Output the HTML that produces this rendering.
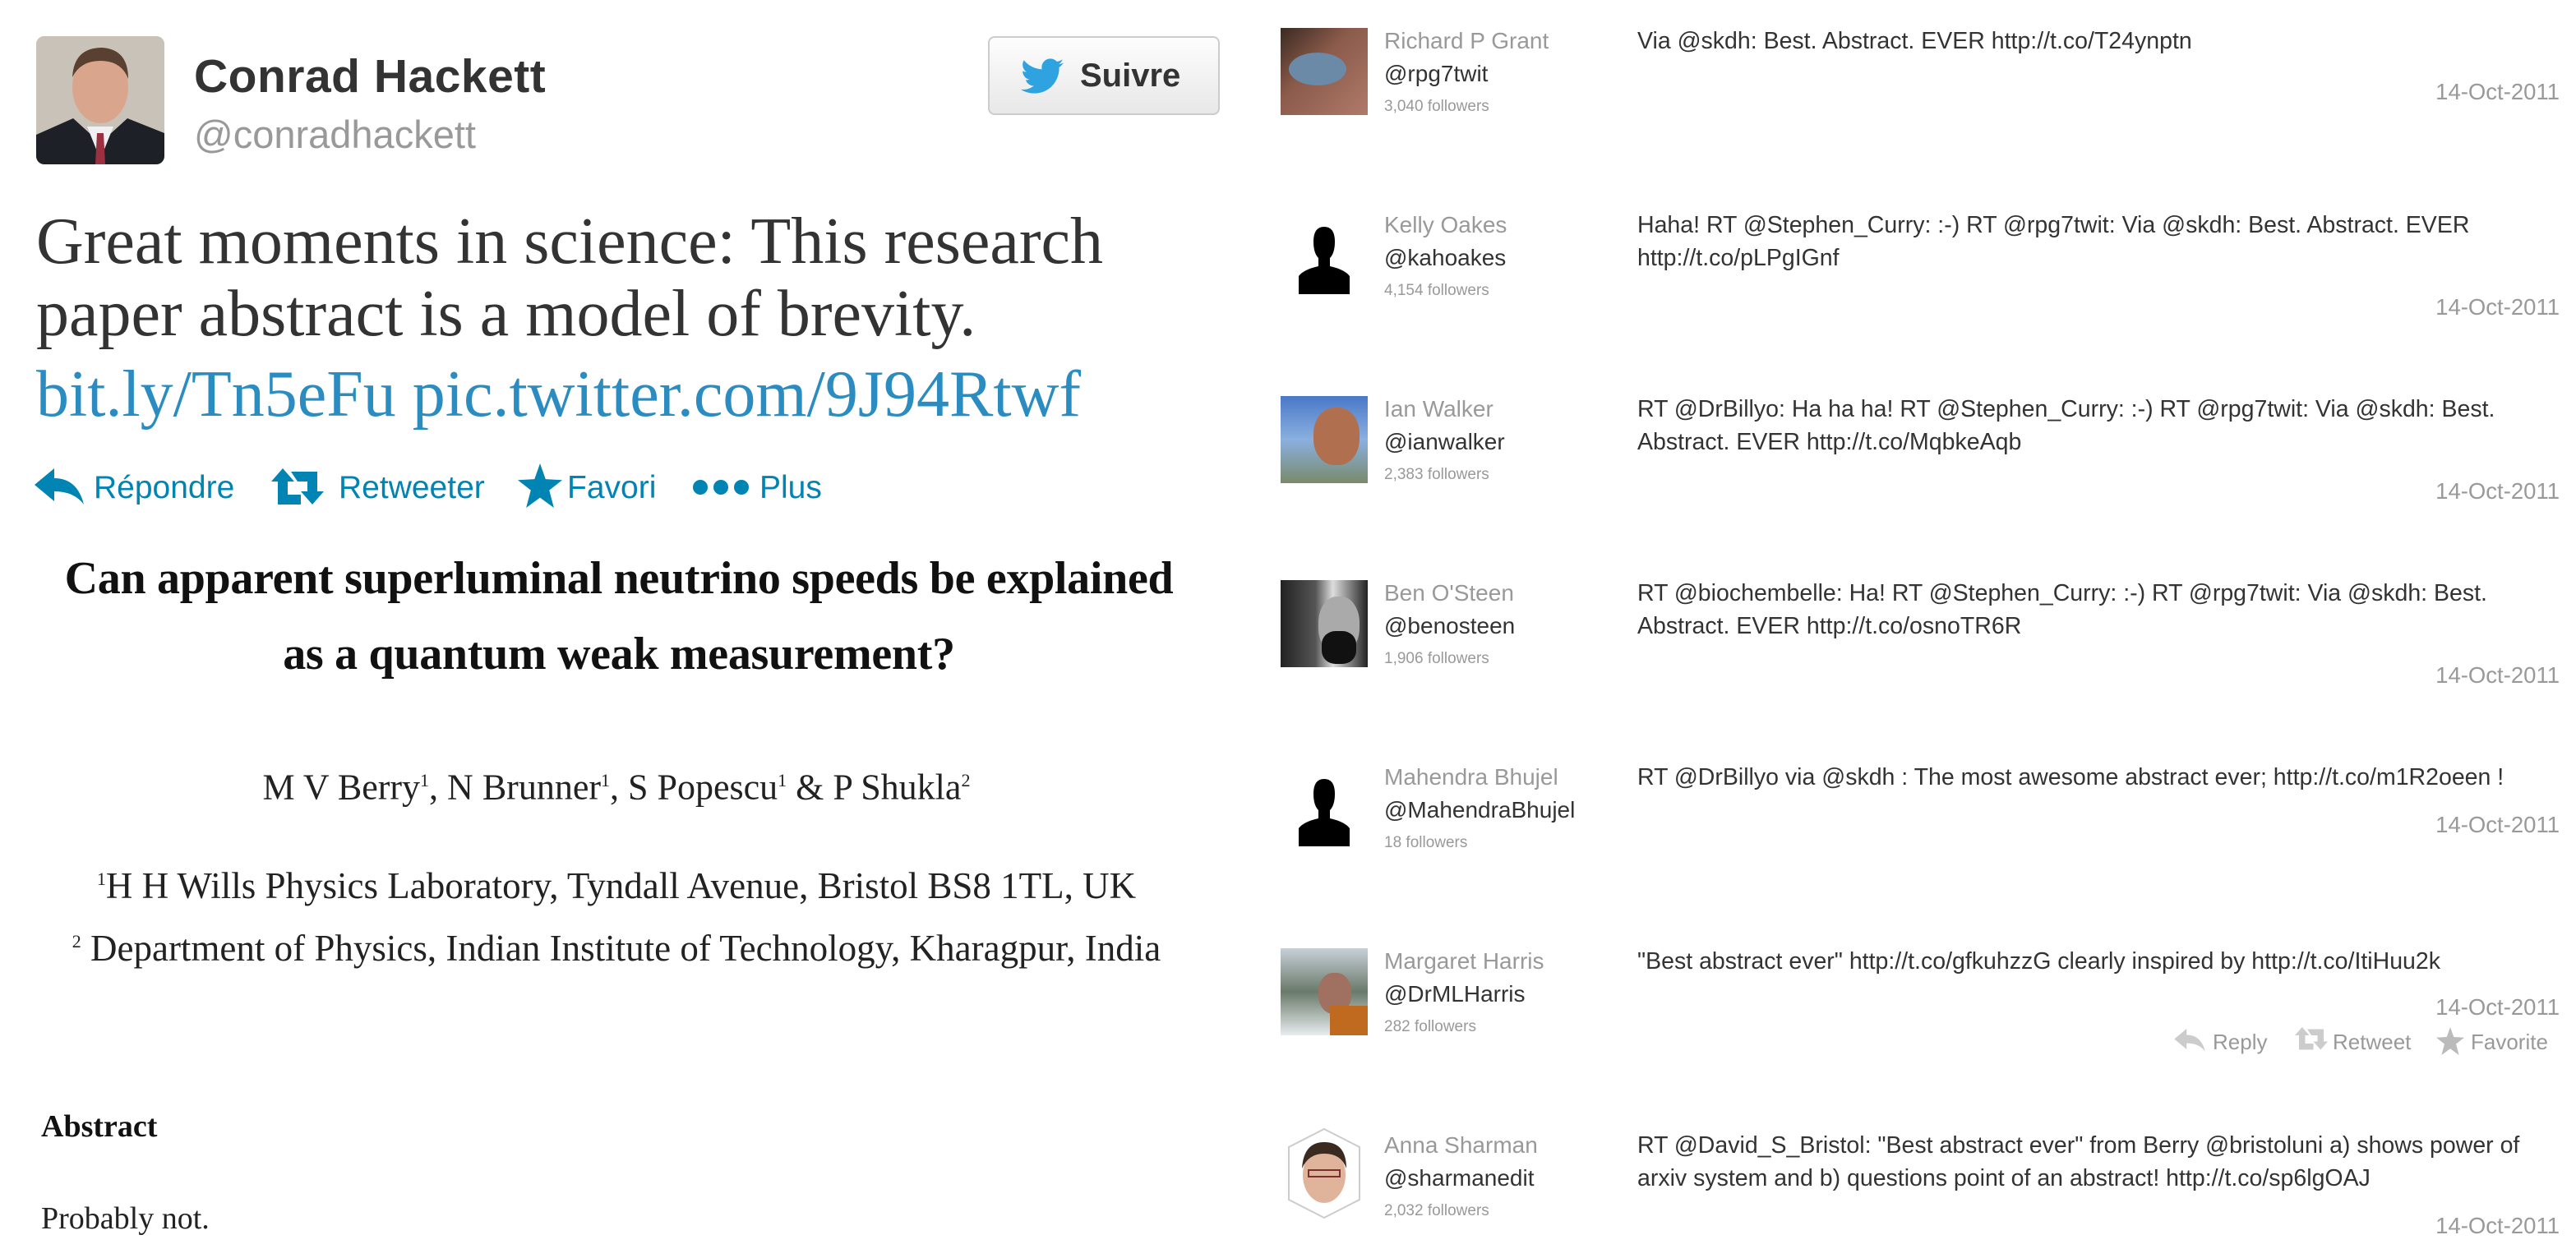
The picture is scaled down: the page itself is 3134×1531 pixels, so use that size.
<!DOCTYPE html>
<html><head><meta charset="utf-8"><style>
*{margin:0;padding:0;box-sizing:border-box}
body{width:3134px;height:1531px;background:#fff;position:relative;overflow:hidden;font-family:"Liberation Sans",Arial,sans-serif}
.a{position:absolute;white-space:nowrap}
.serif{font-family:"Liberation Serif","Times New Roman",serif}
.tw{font-family:"Liberation Serif",Georgia,serif;font-size:80px;color:#333;line-height:92px;left:44px}
.act{top:570px;height:48px;line-height:48px;font-size:39px;color:#0084b4}
.nm{left:1684px;font-size:28px;color:#999;line-height:40px}
.hd{left:1684px;font-size:28px;color:#333;line-height:40px}
.fl{left:1684px;font-size:19px;color:#999;line-height:40px}
.tx{left:1992px;font-size:28.5px;color:#333;line-height:40px}
.dt{right:20px;font-size:27.5px;color:#999;line-height:40px}
.av{position:absolute;left:1558px;width:106px;height:106px;overflow:hidden}
</style></head><body>

<!-- LEFT -->
<div class="a" style="left:44px;top:44px;width:156px;height:156px;border-radius:10px;overflow:hidden;background:#b9b3aa">
<svg width="156" height="156" viewBox="0 0 156 156"><rect width="156" height="156" fill="#c8c2b8"/><path d="M0 120 L45 100 L78 130 L111 100 L156 118 L156 156 L0 156Z" fill="#1e2028"/><path d="M62 110 L78 150 L94 110Z" fill="#f0f0f2"/><path d="M74 118 L82 118 L84 156 L72 156Z" fill="#9a3040"/><ellipse cx="78" cy="62" rx="34" ry="44" fill="#d9a58c"/><path d="M44 50 Q46 14 80 14 Q112 16 112 52 Q104 30 78 30 Q54 30 44 50Z" fill="#5a4030"/></svg>
</div>
<div class="a" style="left:236px;top:60px;font-size:57px;font-weight:bold;color:#333;line-height:66px;letter-spacing:0.5px">Conrad Hackett</div>
<div class="a" style="left:236px;top:136px;font-size:47px;color:#999;line-height:56px">@conradhackett</div>
<div class="a" style="left:1202px;top:44px;width:282px;height:96px;border:2px solid #ccc;border-radius:8px;background:linear-gradient(#fdfdfd,#e8e8e8)">
<svg class="a" style="left:38px;top:24px" width="52" height="46" viewBox="0 0 24 20"><path d="M24 2.4c-.9.4-1.8.6-2.8.8 1-.6 1.8-1.6 2.2-2.7-1 .6-2 1-3.1 1.2C19.4.7 18.1 0 16.6 0c-2.7 0-4.9 2.2-4.9 4.9 0 .4 0 .8.1 1.1C7.7 5.8 4.1 3.9 1.7.9c-.4.7-.7 1.6-.7 2.500 0 1.7.9 3.2 2.2 4.1-.8 0-1.6-.2-2.2-.6v.1c0 2.4 1.7 4.4 3.9 4.8-.4.1-.8.2-1.3.2-.3 0-.6 0-.9-.1.6 2 2.4 3.4 4.6 3.4-1.7 1.3-3.8 2.1-6.1 2.1-.4 0-.8 0-1.2-.1 2.2 1.4 4.8 2.2 7.5 2.2 9.1 0 14-7.5 14-14v-.6c1-.7 1.8-1.6 2.5-2.5z" fill="#2fa3e0"/></svg>
<div class="a" style="left:110px;top:20px;font-size:40px;font-weight:bold;color:#333;line-height:52px">Suivre</div>
</div>

<div class="a tw" style="top:248px">Great moments in science: This research</div>
<div class="a tw" style="top:336px">paper abstract is a model of brevity.</div>
<div class="a tw" style="top:434px;color:#2a8cc0">bit.ly/Tn5eFu pic.twitter.com/9J94Rtwf</div>

<svg class="a" style="left:42px;top:570px" width="60" height="48" viewBox="0 0 30 24"><path d="M0 10 L12 0 L12 6 Q26 6 30 22 Q24 14 12 14 L12 20Z" fill="#0084b4"/></svg>
<div class="a act" style="left:114px">Répondre</div>
<svg class="a" style="left:330px;top:570px" width="64" height="48" viewBox="0 0 32 24"><path d="M7 0 L14 8 L10 8 L10 16 L18 16 L18 22 L4 22 L4 8 L0 8Z M12 2 L28 2 L28 14 L32 14 L25 22 L18 14 L22 14 L22 8 L16 8Z" fill="#0084b4"/></svg>
<div class="a act" style="left:412px">Retweeter</div>
<svg class="a" style="left:630px;top:564px" width="54" height="54" viewBox="0 0 24 24"><path d="M12 0 L15 8.5 L24 9 L17 14.5 L19.5 24 L12 18.5 L4.5 24 L7 14.5 L0 9 L9 8.5Z" fill="#0084b4"/></svg>
<div class="a act" style="left:690px">Favori</div>
<svg class="a" style="left:842px;top:582px" width="70" height="22" viewBox="0 0 70 22"><circle cx="10" cy="11" r="9" fill="#0084b4"/><circle cx="35" cy="11" r="9" fill="#0084b4"/><circle cx="60" cy="11" r="9" fill="#0084b4"/></svg>
<div class="a act" style="left:924px">Plus</div>

<div class="a serif" style="left:0;width:1506px;text-align:center;top:672px;font-size:56px;font-weight:bold;color:#111;line-height:64px;letter-spacing:-0.3px">Can apparent superluminal neutrino speeds be explained</div>
<div class="a serif" style="left:0;width:1506px;text-align:center;top:764px;font-size:56px;font-weight:bold;color:#111;line-height:64px;letter-spacing:-0.3px">as a quantum weak measurement?</div>
<div class="a serif" style="left:0;width:1500px;text-align:center;top:925px;font-size:44px;color:#222;line-height:50px">M V Berry<sup style="font-size:22px">1</sup>, N Brunner<sup style="font-size:22px">1</sup>, S Popescu<sup style="font-size:22px">1</sup> &amp; P Shukla<sup style="font-size:22px">2</sup></div>
<div class="a serif" style="left:0;width:1500px;text-align:center;top:1045px;font-size:45px;color:#222;line-height:50px"><sup style="font-size:22px">1</sup>H H Wills Physics Laboratory, Tyndall Avenue, Bristol BS8 1TL, UK</div>
<div class="a serif" style="left:0;width:1500px;text-align:center;top:1121px;font-size:45px;color:#222;line-height:50px"><sup style="font-size:22px">2</sup> Department of Physics, Indian Institute of Technology, Kharagpur, India</div>
<div class="a serif" style="left:50px;top:1348px;font-size:38px;font-weight:bold;color:#111;line-height:46px">Abstract</div>
<div class="a serif" style="left:50px;top:1460px;font-size:38px;color:#222;line-height:46px">Probably not.</div>

<!-- RIGHT -->
<div class="av" style="top:34px;background:linear-gradient(135deg,#3a2a22,#8a5a4a 40%,#b07a6a)"><div style="position:absolute;left:10px;top:30px;width:70px;height:40px;border-radius:50%;background:#6a8aa8"></div></div>
<div class="a nm" style="top:30px">Richard P Grant</div>
<div class="a hd" style="top:70px">@rpg7twit</div>
<div class="a fl" style="top:110px">3,040 followers</div>
<div class="a tx" style="top:30px">Via @skdh: Best. Abstract. EVER http://t.co/T24ynptn</div>
<div class="a dt" style="top:92px">14-Oct-2011</div>

<svg class="av" style="top:258px" viewBox="0 0 106 106"><path d="M53 18 Q66 18 66 36 Q66 50 60 56 L60 66 Q78 70 84 78 L84 100 L22 100 L22 78 Q28 70 46 66 L46 56 Q40 50 40 36 Q40 18 53 18Z" fill="#000"/></svg>
<div class="a nm" style="top:254px">Kelly Oakes</div>
<div class="a hd" style="top:294px">@kahoakes</div>
<div class="a fl" style="top:334px">4,154 followers</div>
<div class="a tx" style="top:254px">Haha! RT @Stephen_Curry: :-) RT @rpg7twit: Via @skdh: Best. Abstract. EVER<br>http://t.co/pLPgIGnf</div>
<div class="a dt" style="top:354px">14-Oct-2011</div>

<div class="av" style="top:482px;background:linear-gradient(#4a78c8,#8ab0e0 50%,#7a8a6a)"><div style="position:absolute;left:40px;top:14px;width:56px;height:70px;border-radius:45%;background:#b07050"></div></div>
<div class="a nm" style="top:478px">Ian Walker</div>
<div class="a hd" style="top:518px">@ianwalker</div>
<div class="a fl" style="top:558px">2,383 followers</div>
<div class="a tx" style="top:478px">RT @DrBillyo: Ha ha ha! RT @Stephen_Curry: :-) RT @rpg7twit: Via @skdh: Best.<br>Abstract. EVER http://t.co/MqbkeAqb</div>
<div class="a dt" style="top:578px">14-Oct-2011</div>

<div class="av" style="top:706px;background:linear-gradient(90deg,#222,#555 40%,#ddd 60%,#222)"><div style="position:absolute;left:46px;top:20px;width:50px;height:70px;border-radius:45%;background:#aaa"></div><div style="position:absolute;left:50px;top:62px;width:42px;height:40px;border-radius:40%;background:#111"></div></div>
<div class="a nm" style="top:702px">Ben O'Steen</div>
<div class="a hd" style="top:742px">@benosteen</div>
<div class="a fl" style="top:782px">1,906 followers</div>
<div class="a tx" style="top:702px">RT @biochembelle: Ha! RT @Stephen_Curry: :-) RT @rpg7twit: Via @skdh: Best.<br>Abstract. EVER http://t.co/osnoTR6R</div>
<div class="a dt" style="top:802px">14-Oct-2011</div>

<svg class="av" style="top:930px" viewBox="0 0 106 106"><path d="M53 18 Q66 18 66 36 Q66 50 60 56 L60 66 Q78 70 84 78 L84 100 L22 100 L22 78 Q28 70 46 66 L46 56 Q40 50 40 36 Q40 18 53 18Z" fill="#000"/></svg>
<div class="a nm" style="top:926px">Mahendra Bhujel</div>
<div class="a hd" style="top:966px">@MahendraBhujel</div>
<div class="a fl" style="top:1006px">18 followers</div>
<div class="a tx" style="top:926px">RT @DrBillyo via @skdh : The most awesome abstract ever; http://t.co/m1R2oeen !</div>
<div class="a dt" style="top:984px">14-Oct-2011</div>

<div class="av" style="top:1154px;background:linear-gradient(#c8d0d8,#6a7a6a 50%,#e8ecef)"><div style="position:absolute;left:46px;top:30px;width:40px;height:50px;border-radius:45%;background:#a07060"></div><div style="position:absolute;left:60px;top:70px;width:46px;height:40px;background:#c06a20"></div></div>
<div class="a nm" style="top:1150px">Margaret Harris</div>
<div class="a hd" style="top:1190px">@DrMLHarris</div>
<div class="a fl" style="top:1230px">282 followers</div>
<div class="a tx" style="top:1150px">"Best abstract ever" http://t.co/gfkuhzzG clearly inspired by http://t.co/ItiHuu2k</div>
<div class="a dt" style="top:1206px">14-Oct-2011</div>
<svg class="a" style="left:2644px;top:1252px" width="40" height="30" viewBox="0 0 30 24"><path d="M0 10 L12 0 L12 6 Q26 6 30 22 Q24 14 12 14 L12 20Z" fill="#ccc"/></svg>
<div class="a" style="left:2692px;top:1248px;font-size:26px;color:#999;line-height:40px">Reply</div>
<svg class="a" style="left:2792px;top:1250px" width="40" height="30" viewBox="0 0 32 24"><path d="M7 0 L14 8 L10 8 L10 16 L18 16 L18 22 L4 22 L4 8 L0 8Z M12 2 L28 2 L28 14 L32 14 L25 22 L18 14 L22 14 L22 8 L16 8Z" fill="#ccc"/></svg>
<div class="a" style="left:2838px;top:1248px;font-size:26px;color:#999;line-height:40px">Retweet</div>
<svg class="a" style="left:2964px;top:1250px" width="34" height="34" viewBox="0 0 24 24"><path d="M12 0 L15 8.5 L24 9 L17 14.5 L19.5 24 L12 18.5 L4.5 24 L7 14.5 L0 9 L9 8.5Z" fill="#bbb"/></svg>
<div class="a" style="left:3006px;top:1248px;font-size:26px;color:#999;line-height:40px">Favorite</div>

<svg class="av" style="top:1372px;height:112px" viewBox="0 0 106 112"><path d="M53 2 L96 24 L96 88 L53 110 L10 88 L10 24Z" fill="#fff" stroke="#ccc" stroke-width="2"/><ellipse cx="53" cy="58" rx="26" ry="34" fill="#e0b49a"/><path d="M26 50 Q28 18 53 18 Q80 18 80 50 Q74 32 53 32 Q34 32 26 50Z" fill="#3a2a20"/><rect x="34" y="52" width="38" height="8" fill="none" stroke="#7a3030" stroke-width="2"/></svg>
<div class="a nm" style="top:1374px">Anna Sharman</div>
<div class="a hd" style="top:1414px">@sharmanedit</div>
<div class="a fl" style="top:1454px">2,032 followers</div>
<div class="a tx" style="top:1374px">RT @David_S_Bristol: "Best abstract ever" from Berry @bristoluni a) shows power of<br>arxiv system and b) questions point of an abstract! http://t.co/sp6lgOAJ</div>
<div class="a dt" style="top:1472px">14-Oct-2011</div>

</body></html>
